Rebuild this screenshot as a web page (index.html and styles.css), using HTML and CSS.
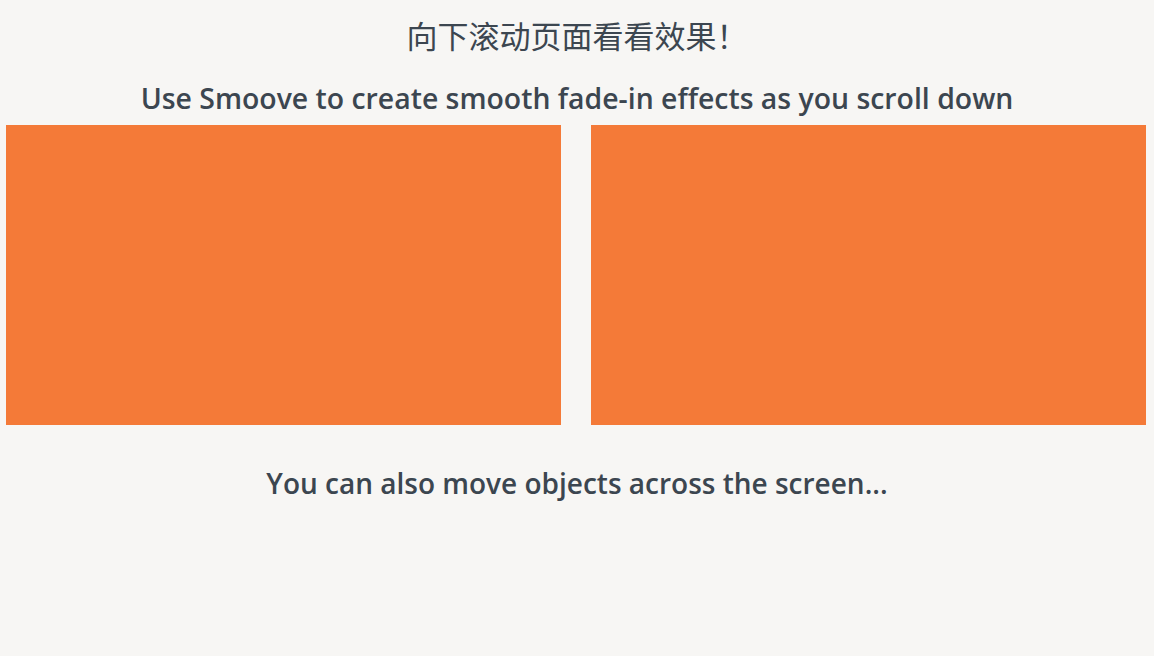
FILE: index.html
```html
<!DOCTYPE html>
<html lang="zh-CN">
<head>
    <meta charset="UTF-8">
    <meta name="viewport" content="width=device-width, initial-scale=1.0">
    <title>Smoove</title>
    <link rel="stylesheet" href="styles.css">
</head>
<body>
    <h2 class="tip">向下滚动页面看看效果！</h2>
    <h1 class="heading heading-fade">Use Smoove to create smooth fade-in effects as you scroll down</h1>
    <div class="boxes">
        <div class="box"></div>
        <div class="box"></div>
    </div>
    <h1 class="heading heading-move">You can also move objects across the screen...</h1>
</body>
</html>
```

FILE: styles.css
```css
body {
    margin: 0;
    background-color: #f7f6f4;
    color: #3c4650;
    font-family: "Open Sans", "Noto Sans CJK SC", sans-serif;
    text-align: center;
}

.tip {
    margin: 0;
    padding-top: 13px;
    font-family: "Noto Sans CJK SC", sans-serif;
    font-size: 31px;
    font-weight: 400;
    line-height: 44px;
}

.heading {
    margin: 0;
    padding-top: 20px;
    font-size: 28px;
    font-weight: 600;
    line-height: 40px;
}

.heading-fade {
    padding-top: 21px;
    font-size: 28.4px;
}

.boxes {
    display: flex;
    gap: 30px;
    padding: 7px 8px 0 6px;
}

.box {
    flex: 1;
    height: 300px;
    background-color: #f47a38;
}

.heading-move {
    padding-top: 38px;
}
```
